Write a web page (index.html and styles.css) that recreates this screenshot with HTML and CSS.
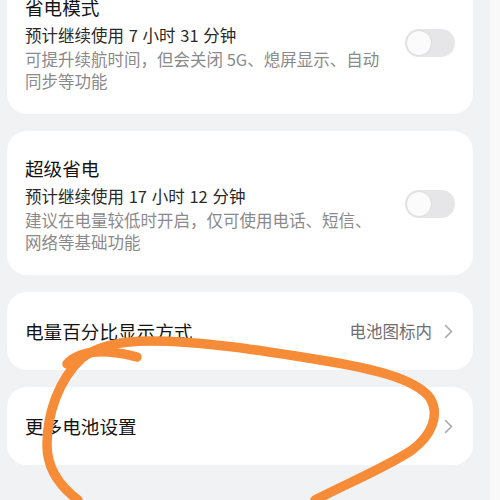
FILE: index.html
```html
<!DOCTYPE html>
<html lang="zh-CN">
<head>
<meta charset="utf-8">
<title>电池</title>
<link rel="stylesheet" href="styles.css">
</head>
<body>
<div class="screen">
  <main class="page">
    <div class="list">
      <section class="card card-switch">
        <div class="info">
          <div class="title">省电模式</div>
          <div class="sub">预计继续使用 7 小时 31 分钟</div>
          <div class="desc">可提升续航时间，但会关闭 5G、熄屏显示、自动同步等功能</div>
        </div>
        <div class="toggle"><span class="knob"></span></div>
      </section>
      <section class="card card-switch">
        <div class="info">
          <div class="title">超级省电</div>
          <div class="sub">预计继续使用 17 小时 12 分钟</div>
          <div class="desc">建议在电量较低时开启，仅可使用电话、短信、网络等基础功能</div>
        </div>
        <div class="toggle"><span class="knob"></span></div>
      </section>
      <section class="card card-link">
        <div class="title grow">电量百分比显示方式</div>
        <span class="value">电池图标内</span>
        <svg class="chev" width="9" height="15" viewBox="0 0 9 15"><path d="M1.5 1.5 L7.5 7.5 L1.5 13.5" fill="none" stroke="#a9a9ab" stroke-width="1.6" stroke-linecap="round" stroke-linejoin="round"/></svg>
      </section>
      <section class="card card-link">
        <div class="title grow">更多电池设置</div>
        <svg class="chev" width="9" height="15" viewBox="0 0 9 15"><path d="M1.5 1.5 L7.5 7.5 L1.5 13.5" fill="none" stroke="#a9a9ab" stroke-width="1.6" stroke-linecap="round" stroke-linejoin="round"/></svg>
      </section>
    </div>
  </main>
  <div class="edge"></div>
</div>
<svg class="mark" width="500" height="500" viewBox="0 0 500 500">
  <path d="M78 500 C62 488 47 470 47 445 C47 415 58 380 82 358 C100 344 125 341 150 341 C200 341 260 350 320 360 C370 368 415 378 430 398 C440 415 432 435 412 450 C390 465 355 480 315 500" fill="none" stroke="#f78c38" stroke-width="9.5" stroke-linecap="round" stroke-linejoin="round"/>
  <path d="M67 364 C75 355 90 351 108 352 C120 353 130 355 137 357" fill="none" stroke="#f78c38" stroke-width="9.5" stroke-linecap="round" stroke-linejoin="round"/>
</svg>
</body>
</html>
```
FILE: styles.css
```css
html, body {
  margin: 0;
  padding: 0;
}
body {
  width: 500px;
  height: 500px;
  overflow: hidden;
  position: relative;
  background: #f9f9fa;
  font-family: "Noto Sans CJK SC", "Noto Sans", sans-serif;
}
.screen {
  display: flex;
  height: 500px;
}
.page {
  width: 490px;
  flex: none;
  box-sizing: border-box;
  padding: 0 17px 0 7px;
  background: #f1f2f4;
  overflow: hidden;
}
.edge {
  flex: 1;
  background: #f9f9fa;
}
.list {
  display: flex;
  flex-direction: column;
  gap: 17px;
  margin-top: -30px;
}
.card {
  background: #ffffff;
  border-radius: 20px;
  display: flex;
  align-items: center;
}
.card-switch {
  padding: 24px 18px 22px 18px;
  gap: 24px;
}
.card-link {
  height: 78px;
  padding: 0 20px 0 18px;
  box-sizing: border-box;
}
.info {
  flex: 1;
  min-width: 0;
}
.title {
  font-size: 18.6px;
  line-height: 26px;
  color: #141414;
  font-weight: 400;
}
.grow {
  flex: 1;
}
.sub {
  margin-top: 3px;
  font-size: 16.5px;
  line-height: 24px;
  color: #2a2a2a;
  word-spacing: 1px;
}
.desc {
  margin-top: 1px;
  font-size: 16.5px;
  line-height: 22px;
  color: #8a8a8c;
}
.toggle {
  width: 50px;
  height: 28px;
  border-radius: 14px;
  background: #e6e6e8;
  flex: none;
  display: flex;
  align-items: center;
  padding: 0 2px;
  box-sizing: border-box;
}
.knob {
  width: 24px;
  height: 24px;
  border-radius: 50%;
  background: #fbfbfb;
  box-shadow: 0 0 2px rgba(0, 0, 0, 0.12);
}
.value {
  font-size: 16.5px;
  color: #6f6f72;
  margin-right: 12px;
}
.chev {
  display: block;
  flex: none;
}
.mark {
  position: absolute;
  top: 0;
  left: 0;
  pointer-events: none;
}
```
